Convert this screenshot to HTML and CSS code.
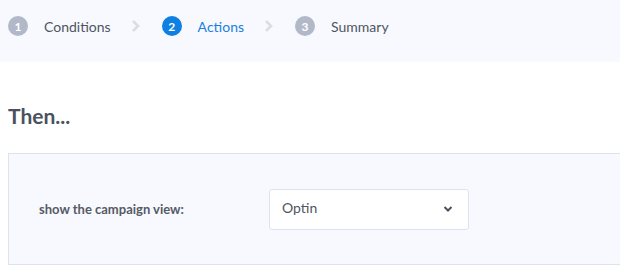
FILE: index.html
```html
<!DOCTYPE html>
<html lang="en">
<head>
  <meta charset="UTF-8">
  <title>Campaign Rules</title>
  <link rel="stylesheet" href="styles.css">
</head>
<body>
  <div class="steps">
    <div class="step done"><span class="num">1</span><span class="label">Conditions</span></div>
    <svg class="sep" width="10" height="14" viewBox="0 0 10 14"><path d="M2 2l5 5-5 5" fill="none" stroke="#d8dde6" stroke-width="2.6"/></svg>
    <div class="step active"><span class="num">2</span><span class="label">Actions</span></div>
    <svg class="sep" width="10" height="14" viewBox="0 0 10 14"><path d="M2 2l5 5-5 5" fill="none" stroke="#d8dde6" stroke-width="2.6"/></svg>
    <div class="step"><span class="num">3</span><span class="label">Summary</span></div>
  </div>

  <div class="content">
    <h2 class="title">Then...</h2>
    <div class="panel">
      <div class="field">
        <label class="field-label">show the campaign view:</label>
        <div class="select">
          <span>Optin</span>
          <svg width="10" height="8" viewBox="0 0 10 8"><path d="M1.5 2l3.5 3.5 3.5-3.5" fill="none" stroke="#4a5160" stroke-width="2"/></svg>
        </div>
      </div>
    </div>
  </div>
</body>
</html>
```

FILE: styles.css
```css
body {
  margin: 0;
  font-family: 'Lato', 'Open Sans', sans-serif;
  background: #fff;
  color: #4f5562;
  overflow: hidden;
}

.steps {
  display: flex;
  align-items: center;
  height: 62px;
  padding: 0 8px 10px;
  box-sizing: border-box;
  background: #f7f9fe;
}

.step {
  display: flex;
  align-items: center;
}

.num {
  width: 20px;
  height: 20px;
  border-radius: 50%;
  background: #b1b8c7;
  color: #fff;
  font-size: 12px;
  font-weight: 700;
  display: flex;
  align-items: center;
  justify-content: center;
}

.label {
  margin-left: 16px;
  font-size: 14px;
  color: #4f5562;
}

.step.active .num {
  background: #0e80e1;
}

.step.active .label {
  color: #1a7fe0;
}

.sep {
  margin: 0 21px 0 20px;
}

.content {
  padding: 0 0 0 8px;
}

.title {
  margin: 41px 0 24px;
  font-size: 21px;
  font-weight: 700;
  color: #4a5160;
  line-height: 26px;
}

.panel {
  margin-right: -10px;
  height: 110px;
  border: 1px solid #dce3ef;
  background: #f8f9fe;
  display: flex;
  align-items: center;
}

.field {
  display: flex;
  align-items: center;
  padding-left: 30px;
}

.field-label {
  width: 230px;
  font-size: 13px;
  font-weight: 700;
  color: #555b66;
}

.select {
  width: 200px;
  height: 41px;
  box-sizing: border-box;
  padding: 0 15px 0 12px;
  border: 1px solid #dce3ef;
  border-radius: 3px;
  background: #fff;
  display: flex;
  align-items: center;
  justify-content: space-between;
  font-size: 14px;
  color: #4f5562;
}

.select span {
  margin-top: -4px;
}
```
